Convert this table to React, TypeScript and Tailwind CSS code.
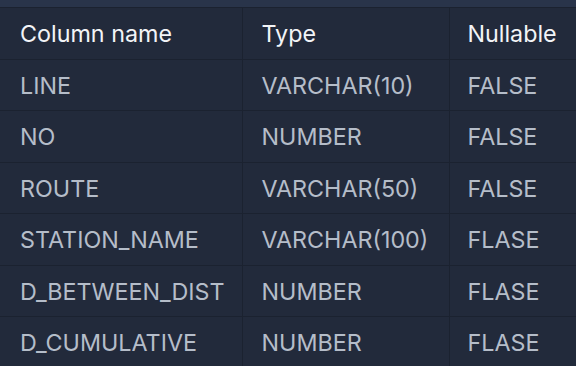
const rows = [
  ['LINE', 'VARCHAR(10)', 'FALSE'],
  ['NO', 'NUMBER', 'FALSE'],
  ['ROUTE', 'VARCHAR(50)', 'FALSE'],
  ['STATION_NAME', 'VARCHAR(100)', 'FLASE'],
  ['D_BETWEEN_DIST', 'NUMBER', 'FLASE'],
  ['D_CUMULATIVE', 'NUMBER', 'FLASE'],
];

export default function App() {
  return (
    <div className="w-[576px] h-[366px] overflow-hidden bg-[#222a3b] font-['Inter',sans-serif]">
      <div className="h-2 bg-[#29344a] border-b border-[#1b2230]" />
      <table className="w-full border-collapse text-[23.3px] leading-none">
        <thead>
          <tr className="h-[51px] border-b border-[#1b2230] text-[#f2f4f7]">
            <th className="w-[242px] border-r border-[#1b2230] pl-5 text-left font-normal">Column name</th>
            <th className="w-[207px] border-r border-[#1b2230] pl-[19px] text-left font-normal">Type</th>
            <th className="pl-[18px] text-left font-normal">Nullable</th>
          </tr>
        </thead>
        <tbody className="text-[#b5bdc9]">
          {rows.map((r) => (
            <tr key={r[0]} className="h-[51.5px] border-b border-[#1b2230]">
              <td className="border-r border-[#1b2230] pl-5 pt-px">{r[0]}</td>
              <td className="border-r border-[#1b2230] pl-[19px] pt-px">{r[1]}</td>
              <td className="pl-[18px] pt-px">{r[2]}</td>
            </tr>
          ))}
        </tbody>
      </table>
    </div>
  );
}
